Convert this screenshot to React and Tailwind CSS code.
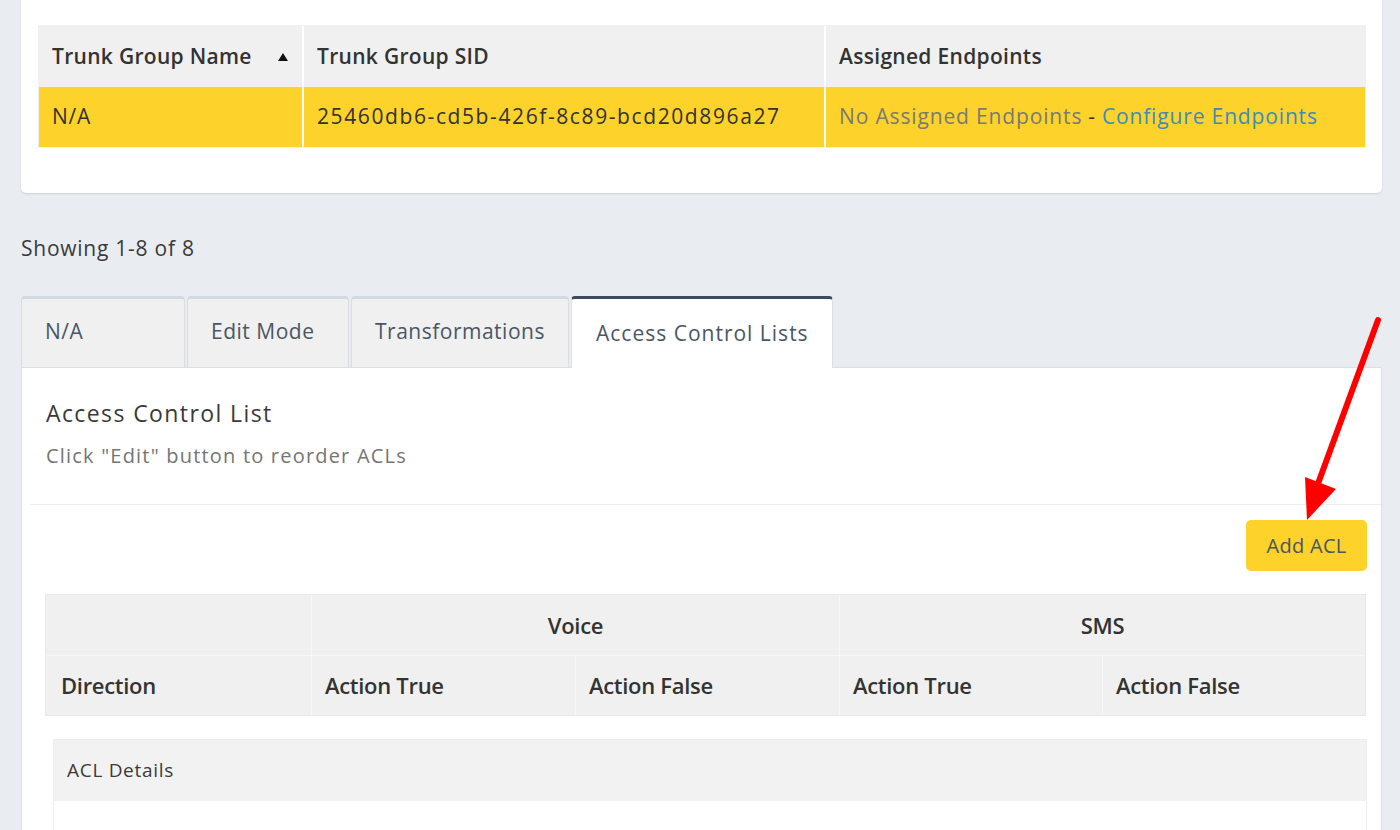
import { useState } from "react";

const font = { fontFamily: "'Open Sans', Lato, sans-serif" };

function SortUp() {
    return (
        <svg width="12" height="10" viewBox="0 0 12 10" className="fill-[#111]">
            <path d="M6 1 L11 9 L1 9 Z" />
        </svg>
    );
}

function RedArrow() {
    return (
        <svg className="absolute left-0 top-0 pointer-events-none" width="1400" height="830">
            <line x1="1378" y1="320" x2="1312" y2="500" stroke="#ff0000" strokeWidth="6" strokeLinecap="round" />
            <path d="M1305 477 L1336 489 L1307 520 Z" fill="#ff0000" />
        </svg>
    );
}

const tabs = [
    { label: "N/A", w: "w-[164px]" },
    { label: "Edit Mode", w: "w-[162px]" },
    { label: "Transformations", w: "w-[218px]" },
    { label: "Access Control Lists", w: "w-[262px]" },
];

export default function App() {
    const [active, setActive] = useState(3);

    return (
        <div className="relative w-[1400px] h-[830px] overflow-hidden bg-[#e9edf2] pl-[21px] pr-[18px]" style={font}>
            {/* Trunk group card */}
            <div className="bg-white h-[193px] rounded-b-[5px] shadow-[0_1px_2px_rgba(0,0,0,0.12)] pl-[17px] pr-[16px] pt-[25px]">
                <div className="border border-[#f0f0f0]">
                    <div className="grid grid-cols-[263px_520px_1fr] gap-x-[2px] bg-white text-[21px] text-[#333]">
                        <div className="bg-[#f0f0f0] h-[61px] flex items-center justify-between pl-[13px] pr-[13px] font-semibold tracking-[0.3px]">
                            <span>Trunk Group Name</span>
                            <SortUp />
                        </div>
                        <div className="bg-[#f0f0f0] h-[61px] flex items-center pl-[13px] font-semibold tracking-[0.3px]">Trunk Group SID</div>
                        <div className="bg-[#f0f0f0] h-[61px] flex items-center pl-[13px] font-semibold tracking-[0.3px]">Assigned Endpoints</div>
                        <div className="bg-[#fdd22b] h-[60px] flex items-center pl-[13px] tracking-[0.8px]">N/A</div>
                        <div className="bg-[#fdd22b] h-[60px] flex items-center pl-[13px] tracking-[1.6px]">25460db6-cd5b-426f-8c89-bcd20d896a27</div>
                        <div className="bg-[#fdd22b] h-[60px] flex items-center pl-[13px] tracking-[0.85px]">
                            <span className="text-[#7a7a72]">No Assigned Endpoints</span>
                            <span className="mx-[6px]">-</span>
                            <a href="#" className="text-[#3a8cc0]">Configure Endpoints</a>
                        </div>
                    </div>
                </div>
            </div>

            <div className="h-[103px] pt-[8px] flex items-center text-[21px] text-[#3a3a3a] tracking-[0.75px]">Showing 1-8 of 8</div>

            {/* Tabs */}
            <div className="flex gap-[2px] items-end">
                {tabs.map((t, i) =>
                    i === active ? (
                        <button
                            key={t.label}
                            onClick={() => setActive(i)}
                            className={`${t.w} h-[72px] -mb-px bg-white rounded-t-[4px] border-t-[3px] border-x border-t-[#3d4b5a] border-x-[#dcdfe3] text-left pl-[24px] pt-[1px] text-[21px] text-[#4a5665] tracking-[1px] relative z-10`}
                        >
                            {t.label}
                        </button>
                    ) : (
                        <button
                            key={t.label}
                            onClick={() => setActive(i)}
                            className={`${t.w} h-[71px] bg-[#f0f0f0] rounded-t-[4px] border-t-[3px] border-x border-t-[#d4d9df] border-x-[#dcdcdc] text-left pl-[23px] pb-[3px] text-[21px] text-[#4a5665] tracking-[0.5px]`}
                        >
                            {t.label}
                        </button>
                    )
                )}
            </div>

            {/* Panel */}
            <div className="bg-white border border-[#dcdfe3] h-[500px]">
                <div className="h-[136px] pl-[24px] pt-[30px]">
                    <div className="text-[23px] text-[#3a3a3a] leading-[30px] tracking-[1.4px]">Access Control List</div>
                    <div className="mt-[14px] text-[20px] text-[#757575] leading-[28px] tracking-[1.2px]">Click "Edit" button to reorder ACLs</div>
                </div>
                <div className="ml-[8px] border-t border-[#eeeeee]" />

                <div className="flex justify-end pr-[14px] pt-[15px]">
                    <button className="w-[121px] h-[51px] bg-[#fdd22b] rounded-[5px] text-[20px] text-[#4a5665] tracking-[0.3px]">Add ACL</button>
                </div>

                {/* ACL table */}
                <div className="ml-[23px] mr-[15px] mt-[23px] border border-[#e8e8e8] bg-[#f0f0f0] text-[22px] font-semibold text-[#333] tracking-[-0.3px]">
                    <div className="grid grid-cols-[265px_528px_1fr] h-[60px]">
                        <div />
                        <div className="flex items-center justify-center border-l border-[#f7f7f7]">Voice</div>
                        <div className="flex items-center justify-center border-l border-[#f7f7f7]">SMS</div>
                    </div>
                    <div className="grid grid-cols-[265px_264px_264px_263px_1fr] h-[60px] border-t border-[#f7f7f7]">
                        <div className="flex items-center pl-[15px]">Direction</div>
                        <div className="flex items-center pl-[13px] border-l border-[#f7f7f7]">Action True</div>
                        <div className="flex items-center pl-[13px] border-l border-[#f7f7f7]">Action False</div>
                        <div className="flex items-center pl-[13px] border-l border-[#f7f7f7]">Action True</div>
                        <div className="flex items-center pl-[13px] border-l border-[#f7f7f7]">Action False</div>
                    </div>
                </div>

                {/* ACL details */}
                <div className="ml-[31px] mr-[14px] mt-[23px] border border-[#eeeeee] h-[200px]">
                    <div className="bg-[#f2f2f2] h-[61px] flex items-center pl-[13px] text-[19px] text-[#3a3a3a] tracking-[0.7px]">ACL Details</div>
                </div>
            </div>

            <RedArrow />
        </div>
    );
}
